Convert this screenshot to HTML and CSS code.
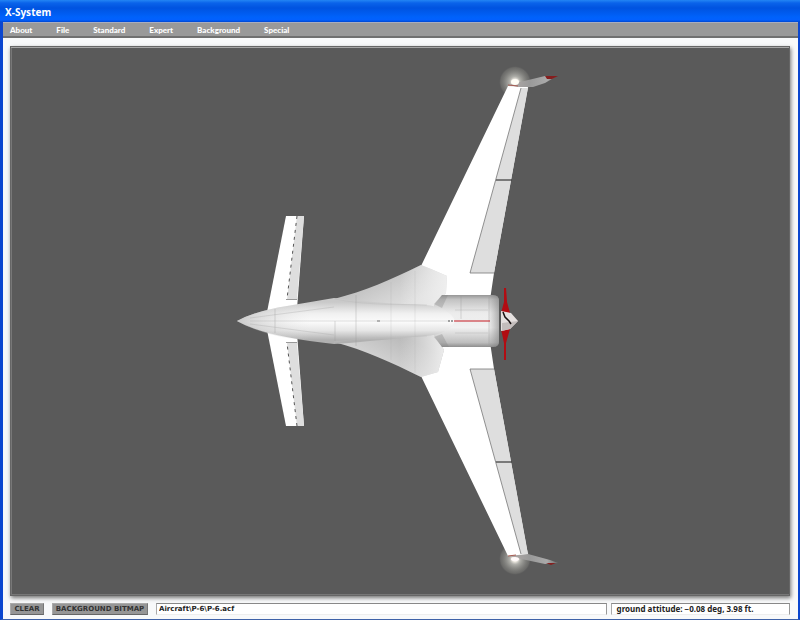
FILE: index.html
```html
<!DOCTYPE html>
<html lang="en">
<head>
<meta charset="utf-8">
<meta name="viewport" content="width=device-width, initial-scale=1">
<title>X-System</title>
<link rel="stylesheet" href="styles.css">
</head>
<body>
<div class="window">
  <header class="titlebar"><h1>X-System</h1></header>
  <nav class="menubar">
    <button type="button">About</button>
    <button type="button">File</button>
    <button type="button">Standard</button>
    <button type="button">Expert</button>
    <button type="button">Background</button>
    <button type="button">Special</button>
  </nav>
  <main class="workspace">
    <div class="viewport">
      <svg class="aircraft" viewBox="12 48 776 546" role="img" aria-label="P-6 top view">
        <defs>
          <linearGradient id="body" x1="0" y1="302" x2="0" y2="340" gradientUnits="userSpaceOnUse">
            <stop offset="0" stop-color="#c9c9c9"/><stop offset=".3" stop-color="#f0f0f0"/><stop offset=".52" stop-color="#fbfbfb"/><stop offset=".75" stop-color="#e6e6e6"/><stop offset="1" stop-color="#b0b0b0"/>
          </linearGradient>
          <linearGradient id="nose" x1="237" y1="0" x2="310" y2="0" gradientUnits="userSpaceOnUse">
            <stop offset="0" stop-color="#aaa" stop-opacity=".6"/><stop offset="1" stop-color="#ddd" stop-opacity="0"/>
          </linearGradient>
          <linearGradient id="strakeTop" x1="385" y1="278" x2="400" y2="308" gradientUnits="userSpaceOnUse">
            <stop offset="0" stop-color="#c4c4c4"/><stop offset=".5" stop-color="#d2d2d2"/><stop offset="1" stop-color="#dedede"/>
          </linearGradient>
          <linearGradient id="strakeBottom" x1="400" y1="335" x2="385" y2="366" gradientUnits="userSpaceOnUse">
            <stop offset="0" stop-color="#b9b9b9"/><stop offset="1" stop-color="#d4d4d4"/>
          </linearGradient>
          <linearGradient id="strakeFade" x1="400" y1="0" x2="446" y2="0" gradientUnits="userSpaceOnUse">
            <stop offset="0" stop-color="#eee" stop-opacity="0"/><stop offset="1" stop-color="#eee"/>
          </linearGradient>
          <linearGradient id="cowl" x1="0" y1="294" x2="0" y2="348" gradientUnits="userSpaceOnUse">
            <stop offset="0" stop-color="#8c8c8c"/><stop offset=".1" stop-color="#c2c2c2"/><stop offset=".35" stop-color="#ececec"/><stop offset=".62" stop-color="#f1f1f1"/><stop offset=".9" stop-color="#bdbdbd"/><stop offset="1" stop-color="#838383"/>
          </linearGradient>
          <linearGradient id="lip" x1="488" y1="0" x2="500" y2="0" gradientUnits="userSpaceOnUse">
            <stop offset="0" stop-color="#888" stop-opacity="0"/><stop offset="1" stop-color="#777" stop-opacity=".6"/>
          </linearGradient>
          <radialGradient id="glow">
            <stop offset="0" stop-color="#fffef5"/><stop offset=".16" stop-color="#f2eee6"/><stop offset=".34" stop-color="#bdbdb7" stop-opacity=".85"/><stop offset=".7" stop-color="#94948f" stop-opacity=".6"/><stop offset=".9" stop-color="#84847f" stop-opacity=".4"/><stop offset="1" stop-color="#666" stop-opacity="0"/>
          </radialGradient>
          <linearGradient id="winglet" x1="512" y1="0" x2="556" y2="0" gradientUnits="userSpaceOnUse">
            <stop offset="0" stop-color="#b0aaa8"/><stop offset=".4" stop-color="#999"/><stop offset=".8" stop-color="#aaa"/><stop offset="1" stop-color="#777"/>
          </linearGradient>
          <g id="wing">
            <path d="M508 86L421 266V300H490L494 273L528 87Z" fill="#fff"/>
            <path d="M521 88L470 273H494L528 88Z" fill="#dedede"/>
            <path d="M521 88L470 273H494" fill="none" stroke="#777" stroke-width=".8"/>
            <path d="M496 180H512" stroke="#444" stroke-width="1.3"/>
          </g>
          <g id="canard">
            <path d="M286 216H304L297 309L267 312Z" fill="#fff"/>
            <path d="M297 216H304L297 299.500H287Z" fill="#dedede"/>
            <path d="M297 216L287 299" stroke="#555" stroke-width="1" stroke-dasharray="3 4"/>
            <path d="M286 299.500H297" stroke="#999" stroke-width="1"/>
          </g>
        </defs>
        <circle cx="515" cy="82" r="16" fill="url(#glow)"/>
        <circle cx="515" cy="559" r="16" fill="url(#glow)"/>
        <use href="#wing"/>
        <use href="#wing" transform="matrix(1 0 0 -1 0 642)"/>
        <use href="#canard"/>
        <use href="#canard" transform="matrix(1 0 0 -1 0 642)"/>
        <path d="M334 299C365 291 390 280 421 265L431 269L447 276L446 293L434 310H334Z" fill="url(#strakeTop)"/>
        <path d="M334 342C365 350 390 362 421 377L438 372L444 350L434 333H334Z" fill="url(#strakeBottom)"/>
        <path d="M400 275L421 265L431 269L447 276L446 293L434 310H400ZM400 367L421 377L438 372L444 350L434 333H400Z" fill="url(#strakeFade)"/>
        <path d="M442 295H493Q499 295 499 301V341Q499 347 493 347H442L434 336V305Z" fill="url(#cowl)"/>
        <path d="M486 295H493Q499 295 499 301V341Q499 347 493 347H486Z" fill="url(#lip)"/>
        <path d="M434 304L442 295L448 295L442 308ZM434 337L442 347H449L442 334Z" fill="#888" opacity=".35"/>
        <path d="M237 321Q255 311 287 306L334 298C365 302 400 304 425 305C440 306 452 312 455 321C452 330 440 335 425 336C400 338 365 342 334 344Q265 337 237 321Z" fill="url(#body)"/>
        <path d="M237 321Q255 311 287 306L310 302V341Q265 337 237 321Z" fill="url(#nose)"/>
        <path d="M334 299C370 306 403 304 427 305M334 342C370 337 403 337 427 336" fill="none" stroke="#bbb" stroke-width=".7" opacity=".6"/>
        <path d="M356 295V346M335 321V341M275 309V333M461 296V319M489 297V345" fill="none" stroke="#999" stroke-width=".7" opacity=".5"/>
        <path d="M391 282V360M415 271V373" fill="none" stroke="#aaa" stroke-width=".6" opacity=".35"/>
        <path d="M250 321H448M250 318L334 307M250 324L334 335M455 310H488M455 333H488" fill="none" stroke="#aaa" stroke-width=".6" opacity=".6"/>
        <path d="M377 321H380" stroke="#777"/>
        <path d="M448 321H454" stroke="#444" stroke-dasharray="2 1"/>
        <path d="M454 321H490" stroke="#c51a23" stroke-width="1.200"/>
        <path d="M504 288H506L507 302L510 313H501L504 302ZM501 329H510L506 343V360H504V343Z" fill="#b20c12"/>
        <path d="M501 311L511 313L518 321L510 329L501 331Z" fill="#e5e0df"/>
        <path d="M502 323L518 321L510 329L502 331Z" fill="#c3bdbc"/>
        <path d="M503 312L505 317L509 321L511 324" fill="none" stroke="#181111" stroke-width="1.500"/>
        <path d="M508 85L520 82L545 76L557 76L545 83L533 87L519 87Z" fill="url(#winglet)"/>
        <path d="M545 76L558 76L552 79L547 79Z" fill="#851e1e"/>
        <path d="M508 85L518 86" stroke="#a75b50"/>
        <path d="M508 556L528 554L550 560L558 563L545 564L526 560Z" fill="url(#winglet)"/>
        <path d="M546 563L556 563L551 565Z" fill="#851e1e"/>
        <path d="M508 556L516 555" stroke="#a75b50"/>
        <ellipse cx="515" cy="82" rx="4" ry="3" fill="#fffef6"/>
        <ellipse cx="515" cy="559" rx="4" ry="2" fill="#fffafa"/>
      </svg>
    </div>
  </main>
  <footer class="statusbar">
    <button class="action" type="button">CLEAR</button>
    <button class="action wide" type="button">BACKGROUND BITMAP</button>
    <input class="field path" type="text" aria-label="Aircraft file" value="Aircraft\P-6\P-6.acf">
    <output class="field readout">ground attitude: −0.08 deg, 3.98 ft.</output>
  </footer>
</div>
</body>
</html>
```
FILE: styles.css
```css
* { box-sizing: border-box; }
body {
  margin: 0;
  font-family: "Noto Sans", sans-serif;
  background: #f8f9fa;
}
button, input, output { font: inherit; }
.window {
  display: flex;
  flex-direction: column;
  min-height: 100vh;
  border: solid #0b46cf;
  border-width: 0 2px 1px 3px;
  border-bottom-color: #3f62a8;
}
.titlebar {
  display: flex;
  align-items: center;
  height: 22px;
  margin: 0 -2px 0 -3px;
  padding: 2px 5px 0;
  background: linear-gradient(#2385f4 0, #0a63ea 3px, #0053e0 8px, #0062fb 17px, #0260ff 20px, #0047ce 22px);
}
.titlebar h1 {
  margin: 0;
  font-size: 10px;
  line-height: 14px;
  color: #fff;
}
.menubar {
  display: flex;
  gap: 24px;
  height: 16px;
  padding: 0 7px;
  background: #999;
  border-top: 1px solid #a9adc0;
  border-bottom: 2px solid #707070;
}
.menubar button {
  padding: 0;
  border: 0;
  background: none;
  color: #fff;
  font-family: Lato, sans-serif;
  font-size: 8px;
  font-weight: 900;
  line-height: 12px;
}
.workspace {
  flex: 1;
  display: flex;
  padding: 8px 8px 0 7px;
}
.viewport {
  flex: 1;
  display: flex;
  border: 1px solid #666;
  background: #5a5a5a;
  box-shadow: inset 0 1px #a5a5a5, inset 1px 0 #777, inset 0 -1px #777, 1px 2px 4px #777;
}
.aircraft {
  flex: 1;
  width: 100%;
  min-width: 0;
  margin: 1px;
}
.statusbar {
  display: flex;
  padding: 7px 8px 4px 7px;
  font-family: "DejaVu Sans", sans-serif;
  font-size: 7px;
  font-weight: bold;
  line-height: 10px;
  color: #222;
}
.action {
  width: 34px;
  height: 12px;
  margin-right: 8px;
  padding: 0;
  border: 1px solid;
  border-color: #aaa #777 #666 #aaa;
  background: #969696;
  color: #333;
  white-space: nowrap;
}
.wide { width: 96px; }
.field {
  height: 12px;
  padding: 0 2px;
  border: 1px solid;
  border-color: #888 #999 #eee #aaa;
  background: #fff;
  color: #222;
}
.path {
  flex: 1;
  min-width: 0;
  margin-right: 4px;
}
.readout {
  flex: 0 0 23%;
  padding-left: 5px;
  font-family: "Noto Sans", sans-serif;
  font-size: 8px;
  white-space: nowrap;
}
```
